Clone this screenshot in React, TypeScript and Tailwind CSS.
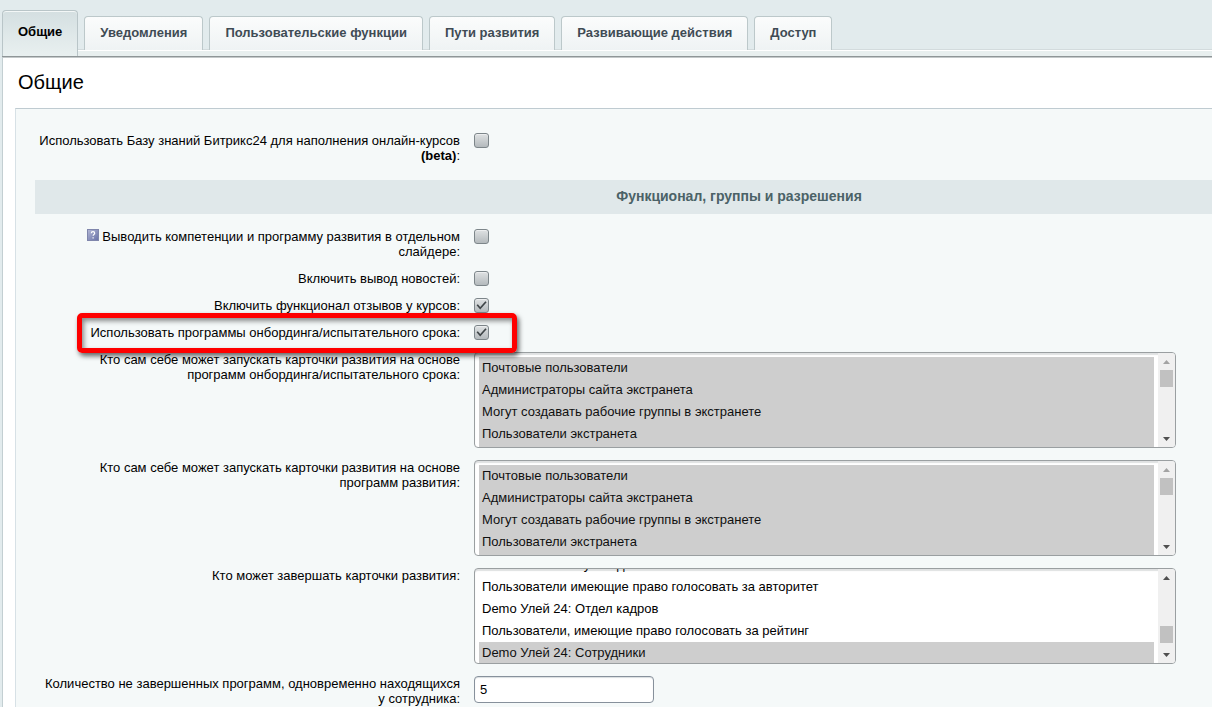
import { useEffect, useId, useRef, useState, type ReactNode } from "react";
import clsx from "clsx";

const tabs = [
  "Общие",
  "Уведомления",
  "Пользовательские функции",
  "Пути развития",
  "Развивающие действия",
  "Доступ",
];

const groups = [
  "Почтовые пользователи",
  "Администраторы сайта экстранета",
  "Могут создавать рабочие группы в экстранете",
  "Пользователи экстранета",
  "Demo Улей 24: Сотрудники",
];

const finishGroups = [
  "Demo Улей 24: Руководство",
  "Пользователи имеющие право голосовать за авторитет",
  "Demo Улей 24: Отдел кадров",
  "Пользователи, имеющие право голосовать за рейтинг",
  "Demo Улей 24: Сотрудники",
];

type RowProps = {
  id: string;
  label: ReactNode;
  hint?: boolean;
  marked?: boolean;
  children: ReactNode;
};

function Row({ id, label, hint, marked, children }: RowProps) {
  return (
    <div className="relative flex items-start gap-3.5">
      <div className="w-[425px] shrink-0 pl-1 text-right leading-[15px]">
        {hint && <HintIcon />}
        <label htmlFor={id}>{label}</label>
      </div>
      <div className="min-w-0 flex-1">{children}</div>
      {marked && (
        <div className="pointer-events-none absolute -top-3 -bottom-[13px] left-[42px] z-10 w-[440px] rounded-[5px] border-5 border-[#fe0000] shadow-[2px_3px_5px_rgba(0,0,0,0.6),inset_2px_3px_5px_rgba(0,0,0,0.45)]" />
      )}
    </div>
  );
}

function HintIcon() {
  return (
    <svg
      className="mr-[3px] inline-block size-3 align-[0px]"
      viewBox="0 0 12 12"
      aria-hidden="true"
    >
      <defs>
        <linearGradient id="hint" x1="0" y1="0" x2="1" y2="1">
          <stop offset="0" stopColor="#b4b9d6" />
          <stop offset="1" stopColor="#666fa6" />
        </linearGradient>
      </defs>
      <rect x="0.5" y="0.5" width="11" height="11" fill="url(#hint)" stroke="#7f86ac" />
      <path
        d="M4.3 4.3c0-1 .7-1.6 1.7-1.6s1.7.6 1.7 1.5c0 1.2-1.6 1.3-1.6 2.6M6.1 8.2v1.2"
        fill="none"
        stroke="#fff"
        strokeWidth="1.2"
      />
    </svg>
  );
}

function Checkbox({ id, defaultChecked }: { id: string; defaultChecked?: boolean }) {
  return (
    <span className="grid size-[15px]">
      <input
        id={id}
        type="checkbox"
        defaultChecked={defaultChecked}
        className="peer col-start-1 row-start-1 size-[15px] appearance-none rounded-[3px] border border-[#7d868a] bg-linear-to-b from-[#dfe2e3] to-[#b4babd] shadow-[inset_0_1px_0_#eceeef]"
      />
      <svg
        viewBox="0 0 15 15"
        className="pointer-events-none invisible col-start-1 row-start-1 size-[15px] peer-checked:visible"
        aria-hidden="true"
      >
        <path d="M3.2 6.8 6.2 10.2 12 3.8" fill="none" stroke="#3f4548" strokeWidth="1.7" />
      </svg>
    </span>
  );
}

type ListBoxProps = {
  id: string;
  options: string[];
  selected: string[];
  offset?: number;
};

function ListBox({ id, options, selected, offset = 0 }: ListBoxProps) {
  const ref = useRef<HTMLSelectElement>(null);
  const [atTop, setAtTop] = useState(offset === 0);

  useEffect(() => {
    if (ref.current) {
      ref.current.scrollTop = offset;
    }
  }, [offset]);

  const scroll = (step: number) => ref.current?.scrollBy({ top: step });

  return (
    <div className="flex h-24 max-w-[702px] overflow-hidden rounded border border-[#9a9fa1] bg-white shadow-[inset_0_2px_1px_#dfe1e2]">
      <select
        ref={ref}
        id={id}
        multiple
        defaultValue={selected}
        onScroll={(e) => setAtTop(e.currentTarget.scrollTop < 4)}
        className={clsx(
          "h-full min-w-0 flex-1 appearance-none overflow-y-scroll border-0 bg-transparent px-1 text-[13px] outline-none [scrollbar-width:none]",
          offset ? "py-0" : "pt-1",
        )}
      >
        {options.map((option) => (
          <option key={option} value={option} className="h-[22px] px-[3px] pt-[3px] pb-0">
            {option}
          </option>
        ))}
      </select>
      <div className="flex w-[17px] shrink-0 flex-col bg-[#f0f0f0]">
        <button
          type="button"
          aria-label="Вверх"
          onClick={() => scroll(-22)}
          className={clsx("flex h-[17px] items-center justify-center", atTop ? "text-[#a3a3a3]" : "text-[#505050]")}
        >
          <svg viewBox="0 0 7 4" className="h-1 w-[7px]" fill="currentColor">
            <path d="M3.5 0 7 4H0z" />
          </svg>
        </button>
        <div className={clsx("flex flex-1 flex-col px-0.5", atTop ? "justify-start" : "justify-end pb-[3px]")}>
          <div className="h-[17px] bg-[#c1c1c1]" />
        </div>
        <button
          type="button"
          aria-label="Вниз"
          onClick={() => scroll(22)}
          className="flex h-[17px] items-center justify-center text-[#505050]"
        >
          <svg viewBox="0 0 7 4" className="h-1 w-[7px]" fill="currentColor">
            <path d="M0 0h7L3.5 4z" />
          </svg>
        </button>
      </div>
    </div>
  );
}

function Tabs() {
  const [active, setActive] = useState(tabs[0]);

  return (
    <div className="ml-0.5 flex h-[50px] items-end gap-1.5 shadow-[inset_0_-1px_0_#d3dbdd]" role="tablist">
      {tabs.map((tab) => (
        <button
          key={tab}
          type="button"
          role="tab"
          aria-selected={tab === active}
          onClick={() => setActive(tab)}
          className={clsx(
            "shrink-0 rounded-t border border-b-0 px-[15px] font-bold whitespace-nowrap",
            tab === active
              ? "relative -mb-1.5 h-[46px] border-[#b9c5c8] border-r-[#b9c5c8] bg-linear-to-b from-[#d4dfe1] to-[#e9f0f0] pb-1 text-black shadow-[inset_0_1px_0_#f3f7f7]"
              : "h-[34px] border-[#bcc8ca] bg-linear-to-b from-[#fbfcfc] to-[#eff3f4] pb-0.5 text-[#3f4b54]",
          )}
        >
          {tab}
        </button>
      ))}
    </div>
  );
}

export default function App() {
  const id = useId();

  return (
    <div className="min-h-screen overflow-x-hidden bg-[#e2ebed] font-['Liberation_Sans',Arial,sans-serif] text-[13px] text-black">
      <Tabs />
      <div className="ml-0.5 h-[7px] border-t border-b border-t-white border-b-[#8f9698] bg-[#e8efef]" />
      <main className="ml-0.5 border-t border-l border-t-[#c4c9ca] border-l-[#c3cfd2] bg-white">
        <h1 className="px-[15px] pt-3 pb-3.5 text-xl leading-6">Общие</h1>
        <form className="ml-3 flex flex-col gap-3 border-t border-l border-t-[#bfcbd1] border-l-[#d7e1e6] bg-[#f5f9f9] pt-6 pb-3 pl-[19px]">
          <Row
            id={`${id}-kb`}
            label={
              <>
                Использовать Базу знаний Битрикс24 для наполнения онлайн-курсов <b>(beta)</b>:
              </>
            }
          >
            <Checkbox id={`${id}-kb`} />
          </Row>
          <h2 className="mt-[5px] mb-[3px] bg-[#e0e8ea] pb-0.5 pl-[231px] text-center text-sm leading-8 font-bold text-[#4b6267]">
            Функционал, группы и разрешения
          </h2>
          <Row id={`${id}-slider`} hint label="Выводить компетенции и программу развития в отдельном слайдере:">
            <Checkbox id={`${id}-slider`} />
          </Row>
          <Row id={`${id}-news`} label="Включить вывод новостей:">
            <Checkbox id={`${id}-news`} />
          </Row>
          <Row id={`${id}-reviews`} label="Включить функционал отзывов у курсов:">
            <Checkbox id={`${id}-reviews`} defaultChecked />
          </Row>
          <Row id={`${id}-onboarding`} marked label="Использовать программы онбординга/испытательного срока:">
            <Checkbox id={`${id}-onboarding`} defaultChecked />
          </Row>
          <Row
            id={`${id}-run-onboarding`}
            label="Кто сам себе может запускать карточки развития на основе программ онбординга/испытательного срока:"
          >
            <ListBox id={`${id}-run-onboarding`} options={groups} selected={groups} />
          </Row>
          <Row
            id={`${id}-run-growth`}
            label="Кто сам себе может запускать карточки развития на основе программ развития:"
          >
            <ListBox id={`${id}-run-growth`} options={groups} selected={groups} />
          </Row>
          <Row id={`${id}-finish`} label="Кто может завершать карточки развития:">
            <ListBox
              id={`${id}-finish`}
              options={finishGroups}
              selected={["Demo Улей 24: Сотрудники"]}
              offset={15}
            />
          </Row>
          <Row
            id={`${id}-limit`}
            label="Количество не завершенных программ, одновременно находящихся у сотрудника:"
          >
            <input
              id={`${id}-limit`}
              type="text"
              defaultValue="5"
              className="block h-[27px] w-[180px] rounded border border-[#87919c] bg-white px-[5px] shadow-[inset_0_1px_1px_#d9dee0]"
            />
          </Row>
        </form>
      </main>
    </div>
  );
}
